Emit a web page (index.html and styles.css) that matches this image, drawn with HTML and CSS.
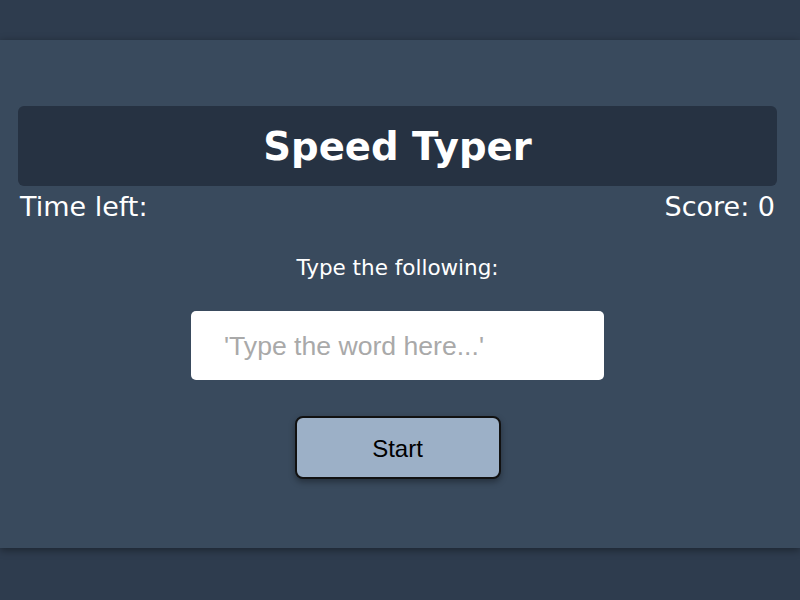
FILE: index.html
```html
<!DOCTYPE html>
<html lang="en">
<head>
<meta charset="utf-8">
<title>Speed Typer</title>
<link rel="stylesheet" href="styles.css">
</head>
<body>
<main class="main">
  <div class="content">
    <header class="header"><h1 class="title">Speed Typer</h1></header>
    <div class="stats">
      <span class="stat">Time left:</span>
      <span class="stat">Score: 0</span>
    </div>
    <p class="prompt">Type the following:</p>
    <input class="word-input" type="text" placeholder="'Type the word here...'">
    <button class="start-btn" type="button">Start</button>
  </div>
</main>
</body>
</html>
```

FILE: styles.css
```css
html, body {
  margin: 0;
  padding: 0;
}
body {
  background: #2e3c4e;
  height: 600px;
  overflow: hidden;
  font-family: "DejaVu Sans", Verdana, sans-serif;
  color: #ffffff;
}
.main {
  margin-top: 40px;
  height: 508px;
  box-sizing: border-box;
  padding-top: 66px;
  background: #394a5d;
  box-shadow: 0 2px 8px rgba(0, 0, 0, 0.4);
}
.content {
  margin: 0 23px 0 18px;
  display: flex;
  flex-direction: column;
  align-items: center;
}
.header {
  align-self: stretch;
  height: 80px;
  background: #263242;
  border-radius: 6px;
  display: flex;
  align-items: center;
  justify-content: center;
}
.title {
  margin: 3px 0 0;
  font-size: 38.6px;
  font-weight: bold;
  line-height: 1;
  color: #ffffff;
}
.stats {
  align-self: stretch;
  display: flex;
  justify-content: space-between;
  margin-top: 6px;
  padding: 0 2px;
  font-size: 27px;
  line-height: 30px;
}
.prompt {
  margin: 34px 0 0;
  font-size: 21.5px;
  line-height: 24px;
}
.word-input {
  margin-top: 31px;
  width: 413px;
  height: 69px;
  box-sizing: border-box;
  border: none;
  border-radius: 5px;
  background: #ffffff;
  padding: 2px 20px 0 33px;
  font-family: "Liberation Sans", Arial, sans-serif;
  font-size: 26.6px;
  color: #333333;
  outline: none;
}
.word-input::placeholder {
  color: #a9a9a9;
}
.start-btn {
  margin-top: 36px;
  width: 206px;
  height: 63px;
  box-sizing: border-box;
  padding: 3px 0 0;
  background: #9cb0c7;
  border: 2px solid #111111;
  border-radius: 8px;
  box-shadow: 0 3px 6px rgba(0, 0, 0, 0.35);
  font-family: "Liberation Sans", Arial, sans-serif;
  font-size: 24px;
  color: #000000;
  cursor: pointer;
}
```
